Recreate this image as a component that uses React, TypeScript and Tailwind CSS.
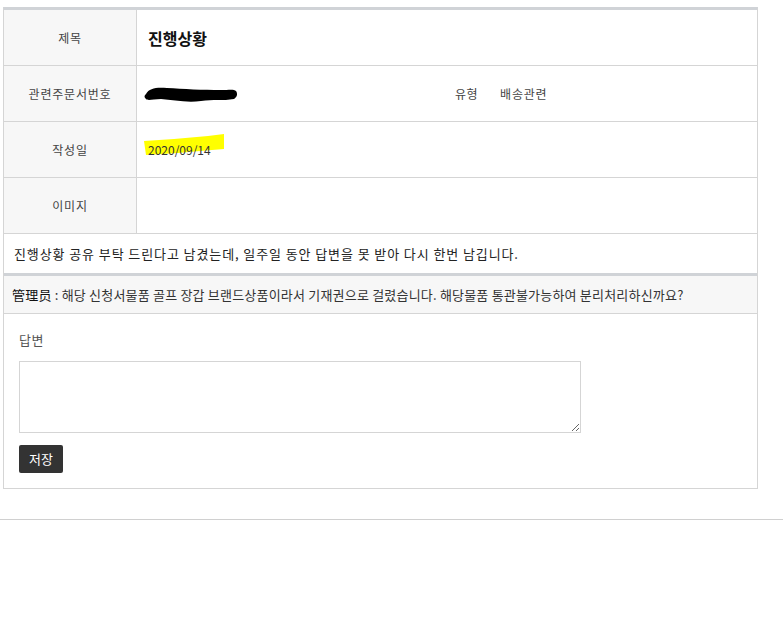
import React from "react";

const font = "font-['Noto_Sans_CJK_KR','Noto_Sans',sans-serif]";

function Row({ label, children }: { label: string; children?: React.ReactNode }) {
    return (
        <div className="flex h-[56px] border-b border-[#d5d5d5]">
            <div className="w-[133px] shrink-0 border-r border-[#d5d5d5] bg-[#f7f7f7] flex items-center justify-center text-[12px] tracking-[0.8px] text-[#444]">
                {label}
            </div>
            <div className="flex-1 flex items-center px-[11px]">{children}</div>
        </div>
    );
}

function Scribble() {
    return (
        <svg width="96" height="24" viewBox="0 0 96 24" className="absolute left-[-5px] top-[-4px]">
            <path
                d="M3 12 C 6 6, 14 5, 24 6 C 40 7, 60 8, 78 8 C 86 8, 91 7, 93 9 C 95 12, 94 15, 91 17 C 80 19, 70 17, 58 19 C 44 21, 30 18, 18 17 C 10 17, 5 19, 3 17 C 1 15, 1 14, 3 12 Z"
                fill="#000"
            />
        </svg>
    );
}

function Highlight() {
    return (
        <svg width="82" height="26" viewBox="0 0 82 26" className="absolute left-[-4px] top-[-8px]">
            <path d="M0 8 L30 6 L64 3 L80 1 L80 16 L56 18 L34 20 L2 22 Z" fill="#ffff00" />
        </svg>
    );
}

export default function App() {
    return (
        <div className={`${font} bg-white w-[783px] h-[621px] pt-[7px]`}>
            <div className="ml-[3px] w-[755px] border-t-[3px] border-[#d0d3d7] border-x border-b border-x-[#d5d5d5] border-b-[#d5d5d5]">
                <Row label="제목">
                    <span className="text-[16px] font-bold text-[#111]">진행상황</span>
                </Row>
                <Row label="관련주문서번호">
                    <div className="w-[307px] shrink-0 relative h-[16px]">
                        <Scribble />
                    </div>
                    <span className="text-[12px] tracking-[0.5px] text-[#444]">유형</span>
                    <span className="ml-[22px] text-[12px] tracking-[0.8px] text-[#444]">배송관련</span>
                </Row>
                <Row label="작성일">
                    <span className="relative text-[12px] text-[#333]">
                        <Highlight />
                        <span className="relative">2020/09/14</span>
                    </span>
                </Row>
                <Row label="이미지" />
                <div className="h-[42px] flex items-center pl-[10px] text-[13px] text-[#222] tracking-[0.9px] border-b-[3px] border-[#d0d3d7]">
                    진행상황 공유 부탁 드린다고 남겼는데, 일주일 동안 답변을 못 받아 다시 한번 남깁니다.
                </div>
                <div className="h-[38px] flex items-center pl-[8px] bg-[#f7f7f7] text-[13px] tracking-[0.2px] text-[#333] border-b border-[#d5d5d5]">
                    <span className="text-[#111]">管理员</span>
                    <span>&nbsp;: 해당 신청서물품 골프 장갑 브랜드상품이라서 기재권으로 걸렸습니다. 해당물품 통관불가능하여 분리처리하신까요?</span>
                </div>
                <div className="pt-[17px] pb-[15px] px-[15px]">
                    <div className="text-[13px] tracking-[0.5px] text-[#555] leading-[18px]">답변</div>
                    <textarea className="mt-[12px] block w-[562px] h-[72px] border border-[#d5d5d5] bg-white resize-y" />
                    <button className="mt-[12px] block w-[44px] h-[28px] rounded-[2px] bg-[#333] text-white text-[13px]">
                        저장
                    </button>
                </div>
            </div>
            <div className="mt-[30px] border-t border-[#d0d0d0]" />
        </div>
    );
}
